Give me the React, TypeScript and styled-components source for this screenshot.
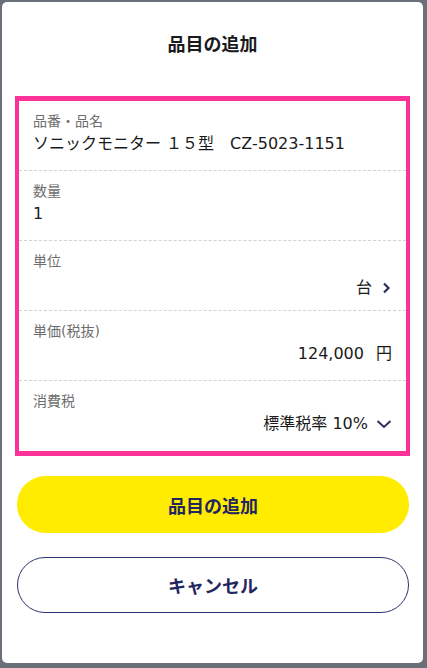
import styled, { createGlobalStyle } from "styled-components";

const GlobalStyle = createGlobalStyle`
  html, body {
    margin: 0;
    padding: 0;
    background: #6a707a;
  }
  body {
    font-family: "DejaVu Sans", "Noto Sans CJK JP", sans-serif;
  }
`;

const Overlay = styled.div`
  width: 427px;
  height: 668px;
  box-sizing: border-box;
  padding: 2px 4px 5px 2px;
`;

const Modal = styled.div`
  height: 100%;
  background: #ffffff;
  border-radius: 5px;
  padding: 0 13px;
  box-sizing: border-box;
  display: flex;
  flex-direction: column;
`;

const Heading = styled.h2`
  margin: 0;
  padding: 29px 0 0;
  height: 94px;
  box-sizing: border-box;
  text-align: center;
  font-family: "Noto Sans CJK JP", sans-serif;
  font-size: 18px;
  line-height: 24px;
  font-weight: 700;
  color: #1a1a1a;
`;

const FormBox = styled.div`
  border: 4px solid #fb3399;
  border-bottom-width: 5px;
  border-top-width: 5px;
  display: flex;
  flex-direction: column;
`;

const Field = styled.div<{ $last?: boolean }>`
  height: 70px;
  box-sizing: border-box;
  padding: 10px 14px 0;
  border-bottom: ${p => (p.$last ? "none" : "1px dashed #d2d2d2")};
  display: flex;
  flex-direction: column;
`;

const Label = styled.div`
  font-size: 14px;
  line-height: 20px;
  color: #6e6e6e;
`;

const Value = styled.div<{ $align?: "left" | "right"; $drop?: number }>`
  margin-top: ${p => 2 + (p.$drop ?? 0)}px;
  display: flex;
  align-items: center;
  justify-content: ${p => (p.$align === "right" ? "flex-end" : "flex-start")};
  gap: 8px;
  font-size: 16px;
  line-height: 22px;
  color: #1a1a1a;
  white-space: pre;
`;

const Unit = styled.span`
  margin-left: 4px;
`;

const Icon = styled.svg`
  display: block;
  flex: none;
`;

const Actions = styled.div`
  padding: 20px 1px 0 2px;
  display: flex;
  flex-direction: column;
  gap: 24px;
`;

const PillButton = styled.button<{ $primary?: boolean }>`
  height: ${p => (p.$primary ? 57 : 56)}px;
  border-radius: 30px;
  border: ${p => (p.$primary ? "none" : "1px solid #2c3372")};
  background: ${p => (p.$primary ? "#ffec00" : "#ffffff")};
  color: #1f2660;
  font-family: "Noto Sans CJK JP", sans-serif;
  font-size: 18px;
  font-weight: 700;
  cursor: pointer;
`;

function ChevronRight() {
  return (
    <Icon width="12" height="16" viewBox="0 0 12 16">
      <path d="M4 3.5 L8.5 8 L4 12.5" fill="none" stroke="#2a2f66" strokeWidth="2.2" />
    </Icon>
  );
}

function ChevronDown() {
  return (
    <Icon width="16" height="12" viewBox="0 0 16 12">
      <path d="M1.5 3 L8 9 L14.5 3" fill="none" stroke="#2a2f66" strokeWidth="2" />
    </Icon>
  );
}

export default function App() {
  return (
    <Overlay>
      <GlobalStyle />
      <Modal>
        <Heading>品目の追加</Heading>
        <FormBox>
          <Field>
            <Label>品番・品名</Label>
            <Value>{"ソニックモニター １５型　CZ-5023-1151"}</Value>
          </Field>
          <Field>
            <Label>数量</Label>
            <Value>1</Value>
          </Field>
          <Field>
            <Label>単位</Label>
            <Value $align="right" $drop={4}>
              台
              <ChevronRight />
            </Value>
          </Field>
          <Field>
            <Label>単価(税抜)</Label>
            <Value $align="right">
              124,000
              <Unit>円</Unit>
            </Value>
          </Field>
          <Field $last>
            <Label>消費税</Label>
            <Value $align="right">
              標準税率 10%
              <ChevronDown />
            </Value>
          </Field>
        </FormBox>
        <Actions>
          <PillButton $primary>品目の追加</PillButton>
          <PillButton>キャンセル</PillButton>
        </Actions>
      </Modal>
    </Overlay>
  );
}
